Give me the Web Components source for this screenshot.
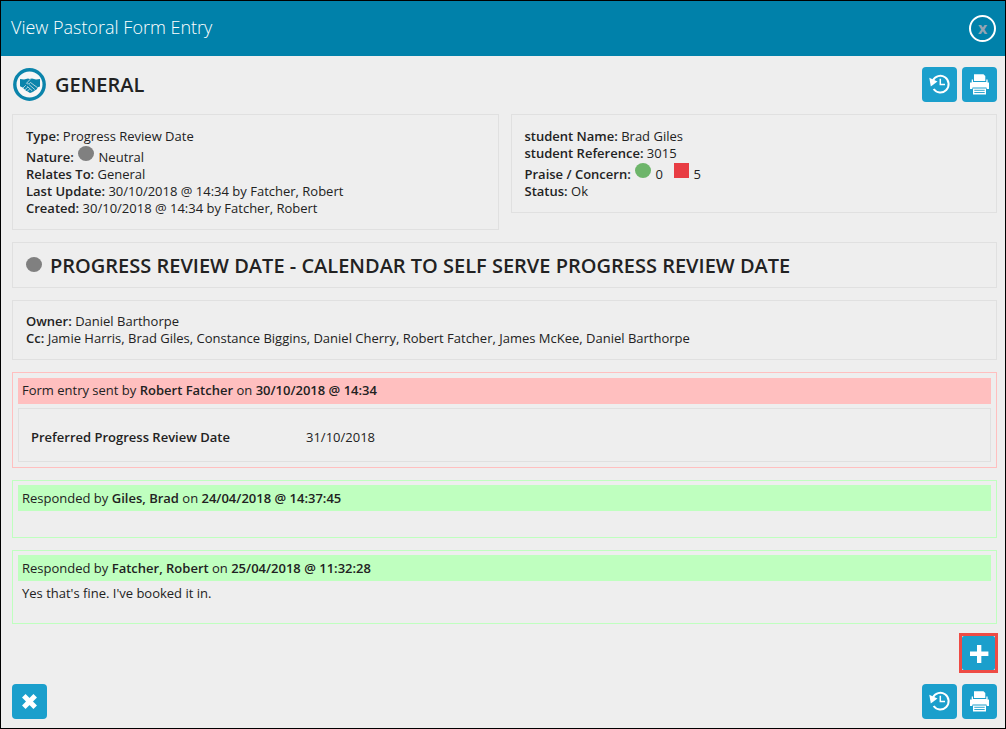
<!DOCTYPE html>
<html lang="en">
<head>
<meta charset="utf-8">
<title>View Pastoral Form Entry</title>
<style>
  html, body { margin: 0; background: #eee; }
  body { font: 13px/17px "Open Sans", "Noto Sans", sans-serif; color: #222; }
</style>
</head>
<body>
<pastoral-dialog></pastoral-dialog>

<template id="t-dialog">
  <style>
    :host { display: flex; flex-direction: column; min-height: 100vh; box-sizing: border-box; border: 1px solid #000; background: #eee; }
    header { display: flex; align-items: center; justify-content: space-between; height: 55px; padding: 0 9px 0 10px; background: #0081aa; color: #fff; }
    header h1 { margin: 0; padding-bottom: 4px; font-size: 18px; line-height: 24px; font-weight: 300; }
    .close { box-sizing: border-box; width: 27px; height: 27px; padding: 0 0 2px; border: 2px solid #fff; border-radius: 50%; background: none; color: #93a5b3; font: bold 16px/20px "Open Sans", sans-serif; }
    main { display: flex; flex-direction: column; gap: 12px; padding: 11px 8px 8px 11px; }
    .row { display: flex; align-items: center; justify-content: space-between; }
    .category { display: flex; align-items: center; gap: 9px; padding-left: 1px; }
    h2 { margin: 0; font-size: 20px; line-height: 26px; font-weight: 600; color: #222; }
    .category svg { display: block; }
    .actions { display: flex; gap: 5px; }
    .columns { display: grid; grid-template-columns: 1fr 1fr; gap: 12px; align-items: start; }
    .title { display: flex; align-items: center; gap: 8px; }
    .title status-mark { margin-bottom: 3px; }
    dl { display: grid; grid-template-columns: 275px 1fr; margin: 0; }
    dt { font-weight: 600; }
    dd { margin: 0; }
    p { margin: 0; padding: 4px; }
    footer { display: flex; flex-direction: column; gap: 11px; margin-top: -3px; }
    .add { align-self: flex-end; margin-right: -1px; border: 3px solid #ee4b44; }
  </style>
  <header>
    <h1>View Pastoral Form Entry</h1>
    <button class="close" type="button" aria-label="Close dialog">x</button>
  </header>
  <main>
    <div class="row">
      <div class="category">
        <svg width="33" height="33" viewBox="0 0 33 33" aria-hidden="true">
          <circle cx="16.500" cy="16.500" r="14.700" fill="#f6f6f6" stroke="#0b84ab" stroke-width="3.400"/>
          <path fill="#0b84ab" d="M7 11l4 .6 4-1 1.500.5 2.500-.7 4 1.200 4-.6v7.500l-2.200.8-1 2-2 1.300-2 1.500-2.800.9-2-1.200-2-1-1.600-1.500-1.800-1.800L7 18.200z"/>
          <path fill="none" stroke="#f6f6f6" stroke-width=".7" stroke-linecap="round" d="M17 11.500l-3.500 3.800c1.200 1 2.800.6 4-.8l6.500 4.800M16.500 17l5 4.300M14.500 18.600l4.500 4M10 20l2.500-2.500M12 21.800l2.500-2.500M14.300 23.300l2-2"/>
        </svg>
        <h2>GENERAL</h2>
      </div>
      <div class="actions">
        <icon-button icon="history" label="History"></icon-button>
        <icon-button icon="print" label="Print"></icon-button>
      </div>
    </div>

    <div class="columns">
      <info-panel roomy>
        <info-line label="Type">Progress Review Date</info-line>
        <info-line label="Nature" tall><status-mark kind="neutral"></status-mark> Neutral</info-line>
        <info-line label="Relates To">General</info-line>
        <info-line label="Last Update">30/10/2018 @ 14:34 by Fatcher, Robert</info-line>
        <info-line label="Created">30/10/2018 @ 14:34 by Fatcher, Robert</info-line>
      </info-panel>
      <info-panel roomy>
        <info-line label="student Name">Brad Giles</info-line>
        <info-line label="student Reference">3015</info-line>
        <info-line label="Praise / Concern" tall><status-mark kind="praise"></status-mark> 0 &nbsp; <status-mark kind="concern"></status-mark> 5</info-line>
        <info-line label="Status">Ok</info-line>
      </info-panel>
    </div>

    <info-panel compact>
      <div class="title"><status-mark kind="neutral"></status-mark><h2>PROGRESS REVIEW DATE - CALENDAR TO SELF SERVE PROGRESS REVIEW DATE</h2></div>
    </info-panel>

    <info-panel>
      <info-line label="Owner">Daniel Barthorpe</info-line>
      <info-line label="Cc">Jamie Harris, Brad Giles, Constance Biggins, Daniel Cherry, Robert Fatcher, James McKee, Daniel Barthorpe</info-line>
    </info-panel>

    <log-entry kind="sent" action="Form entry sent by" person="Robert Fatcher" date="30/10/2018 @ 14:34">
      <info-panel field><dl><dt>Preferred Progress Review Date</dt><dd>31/10/2018</dd></dl></info-panel>
    </log-entry>
    <log-entry kind="reply" action="Responded by" person="Giles, Brad" date="24/04/2018 @ 14:37:45"></log-entry>
    <log-entry kind="reply" action="Responded by" person="Fatcher, Robert" date="25/04/2018 @ 11:32:28">
      <p>Yes that's fine. I've booked it in.</p>
    </log-entry>

    <footer>
      <icon-button class="add" icon="plus" label="Add response" square></icon-button>
      <div class="row">
        <icon-button icon="cross" label="Close"></icon-button>
        <div class="actions">
          <icon-button icon="history" label="History"></icon-button>
          <icon-button icon="print" label="Print"></icon-button>
        </div>
      </div>
    </footer>
  </main>
</template>

<template id="t-panel">
  <style>
    :host { display: block; box-sizing: border-box; border: 1px solid #e0e0e0; padding: 12px 13px; }
    :host([roomy]) { padding-top: 13px; }
    :host([compact]) { padding: 10px 13px 8px; }
    :host([field]) { padding: 20px 12px 15px; }
  </style>
  <slot></slot>
</template>

<template id="t-line">
  <style>
    :host { display: block; }
    :host([tall]) { padding-top: 4px; }
    b { font-weight: 600; }
    ::slotted(status-mark) { margin: -5px 1px 1px; }
  </style>
  <b></b> <slot></slot>
</template>

<template id="t-mark">
  <style>
    :host { display: inline-block; width: 16px; height: 15px; border-radius: 50%; background: #808080; }
    :host([kind="praise"]) { background: #6db56a; }
    :host([kind="concern"]) { width: 15px; border-radius: 0; background: #e83c43; }
  </style>
</template>

<template id="t-entry">
  <style>
    :host { display: block; box-sizing: border-box; border: 1px solid #bfffbf; padding: 4px 5px; --tone: #bfffbf; }
    :host([kind="sent"]) { border-color: #ffbfbf; padding: 5px; --tone: #ffbfbf; }
    .bar { padding: 5px 4px 4px; background: var(--tone); }
    :host([kind="sent"]) .bar { padding: 4px 4px 5px; }
    .bar b { font-weight: 600; }
    .content { min-height: 22px; }
    :host([kind="sent"]) .content { padding-top: 4px; }
    :host([kind="reply"]) ::slotted(p) { margin-bottom: 13px !important; }
  </style>
  <div class="bar"><span class="action"></span> <b class="person"></b> on <b class="date"></b></div>
  <div class="content"><slot></slot></div>
</template>

<template id="t-button">
  <style>
    :host { display: block; }
    button { display: block; width: 35px; height: 35px; margin: 0; padding: 0; border: 0; border-radius: 4px; background: #1b9fcc; cursor: pointer; }
    :host([square]) button { width: 33px; height: 34px; border-radius: 2px; }
    svg { display: block; width: 100%; height: 100%; }
  </style>
  <button type="button"><svg viewBox="0 0 35 35" aria-hidden="true"></svg></button>
</template>

<script>
  const ICONS = {
    history: `<path d="M10.800 13.600A8.300 8.300 0 1 1 11.600 22" fill="none" stroke="#fff" stroke-width="2"/>
      <path d="M7.300 10.800l1.500 8.600 6.700-4.800z" fill="#fff"/>
      <path d="M18.300 11.700v5.800h4.700" fill="none" stroke="#fff" stroke-width="1.500"/>`,
    print: `<path d="M12 7.300h9.500l1.800 1.700v5H12z" fill="#fff"/>
      <path d="M9.700 12.500h1.300v2.500h13.300v-2.500h1.300v3.200H27V22h-2.500v-1.500h-14V22H8v-6.300h1.700z" fill="#fff"/>
      <path d="M8 15.700h19V21H8z" fill="#fff"/>
      <path d="M10.500 20.500h14v1h-14z" fill="#1b9fcc"/>
      <path d="M11 21.500h13V27.500H11z" fill="#fff"/>
      <path d="M12.300 23.300h10.400M12.300 25.500h10.400" stroke="#1b9fcc" stroke-width=".9"/>`,
    plus: `<path d="M15.900 9h4.600v7h7.500v4.600H20.500V28h-4.600v-7.400H8.500v-4.600h7.400z" fill="#fff"/>`,
    cross: `<path d="M11.800 11.800l11.400 11.400M23.200 11.800L11.800 23.200" stroke="#fff" stroke-width="5" fill="none"/>`
  };

  class Base extends HTMLElement {
    constructor() {
      super();
      this.attachShadow({ mode: "open" })
        .append(document.getElementById(this.constructor.template).content.cloneNode(true));
    }
    put(selector, attribute, suffix = "") {
      this.shadowRoot.querySelector(selector).textContent = this.getAttribute(attribute) + suffix;
    }
  }

  customElements.define("info-panel", class extends Base { static template = "t-panel"; });
  customElements.define("status-mark", class extends Base { static template = "t-mark"; });
  customElements.define("info-line", class extends Base {
    static template = "t-line";
    connectedCallback() { this.put("b", "label", ":"); }
  });
  customElements.define("log-entry", class extends Base {
    static template = "t-entry";
    connectedCallback() {
      this.put(".action", "action");
      this.put(".person", "person");
      this.put(".date", "date");
    }
  });
  customElements.define("icon-button", class extends Base {
    static template = "t-button";
    connectedCallback() {
      this.shadowRoot.querySelector("button").setAttribute("aria-label", this.getAttribute("label"));
      this.shadowRoot.querySelector("svg").innerHTML = ICONS[this.getAttribute("icon")];
    }
  });
  customElements.define("pastoral-dialog", class extends Base { static template = "t-dialog"; });
</script>
</body>
</html>
